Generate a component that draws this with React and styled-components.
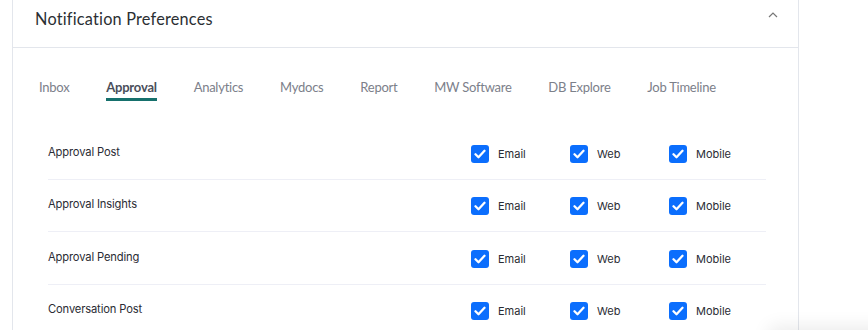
import React from "react";
import styled, { createGlobalStyle } from "styled-components";

const Global = createGlobalStyle`
  html, body { margin: 0; padding: 0; background: #fff; }
  body { font-family: Lato, "Open Sans", sans-serif; overflow: hidden; }
`;

const Page = styled.div`
  width: 868px;
  height: 330px;
  position: relative;
  overflow: hidden;
`;

const Card = styled.div`
  margin-left: 12px;
  width: 785px;
  border-left: 1px solid #e3e6ec;
  border-right: 1px solid #e3e6ec;
  margin-top: -10px;
  height: 360px;
`;

const Header = styled.div`
  height: 58px;
  display: flex;
  align-items: center;
  justify-content: space-between;
  padding: 0 20px 0 22px;
  box-sizing: border-box;
  border-bottom: 1px solid #e3e6ec;
  padding-bottom: 1px;
`;

const Title = styled.h2`
  margin: 0;
  font-family: Lato, sans-serif;
  font-weight: 400;
  font-size: 16.3px;
  color: #2b2f33;
  letter-spacing: 0.2px;
`;

const Chevron = styled.svg`
  width: 10px;
  height: 8px;
  margin-bottom: 6px;
`;

const Tabs = styled.nav`
  display: flex;
  gap: 36.8px;
  padding: 31px 0 0 26px;
`;

const Tab = styled.div`
  font-family: Lato, sans-serif;
  font-size: 13px;
  color: ${(p) => (p.$active ? "#4a4e5a" : "#7c808a")};
  font-weight: ${(p) => (p.$active ? 700 : 400)};
  padding-bottom: 3px;
  border-bottom: 3px solid ${(p) => (p.$active ? "#16706c" : "transparent")};
  letter-spacing: ${(p) => (p.$active ? "-0.2px" : "-0.25px")};
`;

const List = styled.div`
  margin: 26px 0 0 35px;
  width: 718px;
`;

const Row = styled.div`
  display: flex;
  align-items: center;
  height: 51.5px;
  border-bottom: 1px solid ${(p) => (p.$last ? "transparent" : "#eeeff6")};
`;

const Label = styled.div`
  flex: 1;
  font-family: Inter, sans-serif;
  font-size: 11.2px;
  color: #2a2c34;
  margin-top: -2px;
  letter-spacing: -0.15px;
`;

const Options = styled.div`
  display: grid;
  grid-template-columns: 99px 99px 97px;
  margin-top: 2px;
`;

const Option = styled.label`
  display: flex;
  align-items: center;
  gap: 9px;
  font-family: Inter, sans-serif;
  font-size: 11px;
  color: #2a2c34;
`;

const Box = styled.span`
  flex-shrink: 0;
  width: 18px;
  height: 18px;
  border-radius: 3px;
  background: #0b6efd;
  display: flex;
  align-items: center;
  justify-content: center;
`;

const Shadow = styled.div`
  position: absolute;
  right: -40px;
  bottom: -60px;
  width: 140px;
  height: 60px;
  background: #fff;
  box-shadow: 0 -4px 18px rgba(0,0,0,0.08);
  border-radius: 8px;
`;

const tabs = ["Inbox", "Approval", "Analytics", "Mydocs", "Report", "MW Software", "DB Explore", "Job Timeline"];
const rows = ["Approval Post", "Approval Insights", "Approval Pending", "Conversation Post"];

function Check() {
  return (
    <Box>
      <svg width="12" height="10" viewBox="0 0 12 10">
        <path d="M1.5 5.2 L4.5 8.2 L10.5 1.8" fill="none" stroke="#fff" strokeWidth="2.3" strokeLinecap="round" strokeLinejoin="round" />
      </svg>
    </Box>
  );
}

export default function App() {
  return (
    <Page>
      <Global />
      <Card>
        <Header>
          <Title>Notification Preferences</Title>
          <Chevron viewBox="0 0 10 8">
            <path d="M1 6 L5 2 L9 6" fill="none" stroke="#777" strokeWidth="1.2" />
          </Chevron>
        </Header>
        <Tabs>
          {tabs.map((t) => (
            <Tab key={t} $active={t === "Approval"}>{t}</Tab>
          ))}
        </Tabs>
        <List>
          {rows.map((r, i) => (
            <Row key={r} $last={i === rows.length - 1}>
              <Label>{r}</Label>
              <Options>
                {["Email", "Web", "Mobile"].map((o) => (
                  <Option key={o}>
                    <Check />
                    {o}
                  </Option>
                ))}
              </Options>
            </Row>
          ))}
        </List>
      </Card>
      <Shadow />
    </Page>
  );
}
